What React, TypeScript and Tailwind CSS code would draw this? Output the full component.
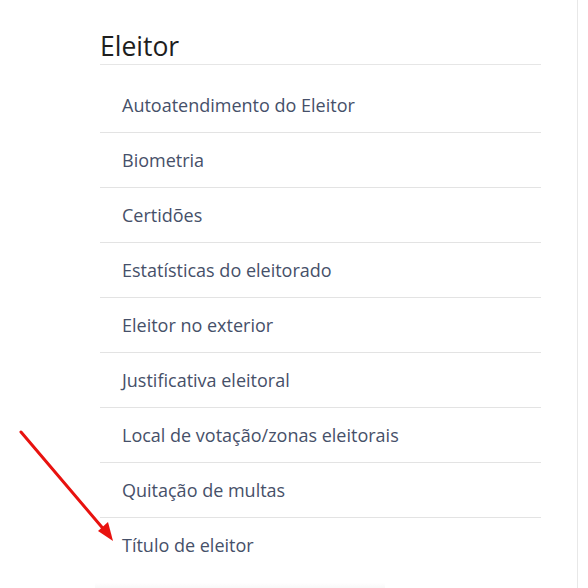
import React from "react";

const items = [
  "Autoatendimento do Eleitor",
  "Biometria",
  "Certidões",
  "Estatísticas do eleitorado",
  "Eleitor no exterior",
  "Justificativa eleitoral",
  "Local de votação/zonas eleitorais",
  "Quitação de multas",
  "Título de eleitor",
];

export default function App() {
  return (
    <div
      className="relative w-[588px] h-[588px] bg-white overflow-hidden"
      style={{ fontFamily: '"Open Sans", sans-serif' }}
    >
      <div className="flex h-full">
        <div className="w-[577px] h-full pl-[100px] pr-[36px] pt-[29px]">
          <h2 className="text-[26.5px] leading-[35px] text-[#1e1e1e] border-b border-[#e6e6e6]">
            Eleitor
          </h2>
          <ul className="mt-[13px]">
            {items.map((t, i) => (
              <li
                key={t}
                className={`h-[55px] flex items-center pl-[22px] text-[18px] text-[#465069] ${
                  i < items.length - 1 ? "border-b border-[#e3e3e3]" : ""
                }`}
              >
                {t}
              </li>
            ))}
          </ul>
        </div>
        <div className="w-px h-full bg-[#e8e8e8]" />
      </div>
      <div className="absolute left-[95px] top-[583px] w-[290px] h-[5px] bg-gradient-to-b from-white to-[#f8f8f8]" />
      <svg className="absolute left-0 top-0" width="588" height="588">
        <line x1="21" y1="432" x2="106" y2="532" stroke="#e8120f" strokeWidth="3" strokeLinecap="round" />
        <polygon points="113,541 98,531 108,522" fill="#e8120f" />
      </svg>
    </div>
  );
}
